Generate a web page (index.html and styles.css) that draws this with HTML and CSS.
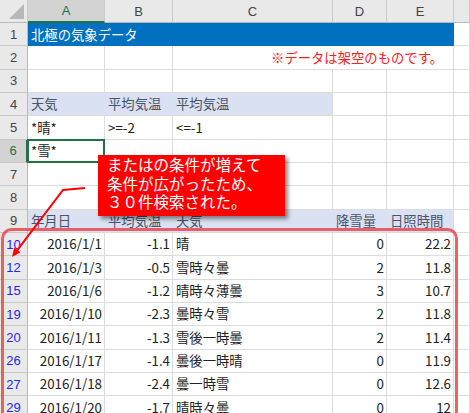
FILE: index.html
```html
<!DOCTYPE html>
<html lang="ja">
<head>
<meta charset="utf-8">
<link rel="stylesheet" href="styles.css">
</head>
<body>
<div class="sheet">
  <div class="grid">
    <!-- header row -->
    <div class="hd corner"><span class="tri"></span></div>
    <div class="hd col sel">A</div>
    <div class="hd col">B</div>
    <div class="hd col">C</div>
    <div class="hd col">D</div>
    <div class="hd col">E</div>
    <div class="hd col last"></div>

    <!-- row 1 -->
    <div class="rh">1</div>
    <div class="c title span5">北極の気象データ</div>
    <div class="c f"></div>

    <!-- row 2 -->
    <div class="rh">2</div>
    <div class="c"></div>
    <div class="c"></div>
    <div class="c note span3">※データは架空のものです。</div>
    <div class="c f"></div>

    <!-- row 3 -->
    <div class="rh">3</div>
    <div class="c"></div><div class="c"></div><div class="c"></div><div class="c"></div><div class="c"></div>
    <div class="c f"></div>

    <!-- row 4 -->
    <div class="rh">4</div>
    <div class="c hb in">天気</div>
    <div class="c hb in">平均気温</div>
    <div class="c hb">平均気温</div>
    <div class="c"></div><div class="c"></div>
    <div class="c f"></div>

    <!-- row 5 -->
    <div class="rh">5</div>
    <div class="c">*晴*</div>
    <div class="c">&gt;=-2</div>
    <div class="c">&lt;=-1</div>
    <div class="c"></div><div class="c"></div>
    <div class="c f"></div>

    <!-- row 6 -->
    <div class="rh rsel">6</div>
    <div class="c active">*雪*</div>
    <div class="c"></div><div class="c"></div><div class="c"></div><div class="c"></div>
    <div class="c f"></div>

    <!-- row 7 -->
    <div class="rh">7</div>
    <div class="c"></div><div class="c"></div><div class="c"></div><div class="c"></div><div class="c"></div>
    <div class="c f"></div>

    <!-- row 8 -->
    <div class="rh">8</div>
    <div class="c"></div><div class="c"></div><div class="c"></div><div class="c"></div><div class="c"></div>
    <div class="c f"></div>

    <!-- row 9 -->
    <div class="rh">9</div>
    <div class="c hb in">年月日</div>
    <div class="c hb in">平均気温</div>
    <div class="c hb in">天気</div>
    <div class="c hb in">降雪量</div>
    <div class="c hb">日照時間</div>
    <div class="c f"></div>

    <!-- data -->
    <div class="rh flt">10</div>
    <div class="c r">2016/1/1</div><div class="c r">-1.1</div><div class="c">晴</div><div class="c r">0</div><div class="c r">22.2</div>
    <div class="c f"></div>

    <div class="rh flt">12</div>
    <div class="c r">2016/1/3</div><div class="c r">-0.5</div><div class="c">雪時々曇</div><div class="c r">2</div><div class="c r">11.8</div>
    <div class="c f"></div>

    <div class="rh flt">15</div>
    <div class="c r">2016/1/6</div><div class="c r">-1.2</div><div class="c">晴時々薄曇</div><div class="c r">3</div><div class="c r">10.7</div>
    <div class="c f"></div>

    <div class="rh flt">19</div>
    <div class="c r">2016/1/10</div><div class="c r">-2.3</div><div class="c">曇時々雪</div><div class="c r">2</div><div class="c r">11.8</div>
    <div class="c f"></div>

    <div class="rh flt">20</div>
    <div class="c r">2016/1/11</div><div class="c r">-1.3</div><div class="c">雪後一時曇</div><div class="c r">2</div><div class="c r">11.4</div>
    <div class="c f"></div>

    <div class="rh flt">26</div>
    <div class="c r">2016/1/17</div><div class="c r">-1.4</div><div class="c">曇後一時晴</div><div class="c r">0</div><div class="c r">11.9</div>
    <div class="c f"></div>

    <div class="rh flt">27</div>
    <div class="c r">2016/1/18</div><div class="c r">-2.4</div><div class="c">曇一時雪</div><div class="c r">0</div><div class="c r">12.6</div>
    <div class="c f"></div>

    <div class="rh flt">29</div>
    <div class="c r">2016/1/20</div><div class="c r">-1.7</div><div class="c">晴時々曇</div><div class="c r">0</div><div class="c r">12</div>
    <div class="c f"></div>
  </div>

  <svg class="overlay" width="470" height="413" viewBox="0 0 470 413">
    <rect x="2.5" y="229.5" width="454" height="220" rx="9" ry="9" fill="none" stroke="#e8464e" stroke-opacity="0.85" stroke-width="3"/>
    <polyline points="85,188 63,190 17.5,249.8" fill="none" stroke="#ff0000" stroke-width="2"/>
    <polygon points="12,257 20.6,252.3 14.3,247.4" fill="#ff0000"/>
  </svg>

  <div class="callout">またはの条件が増えて<br>条件が広がったため、<br>３０件検索された。</div>
</div>
</body>
</html>
```

FILE: styles.css
```css
html, body {
  margin: 0;
  padding: 0;
  background: #ffffff;
}

.sheet {
  position: relative;
  width: 470px;
  height: 413px;
  overflow: hidden;
  font-family: "Noto Sans CJK JP", "Noto Sans", sans-serif;
  font-size: 13.33px;
  color: #222222;
}

.grid {
  display: grid;
  grid-template-columns: 28px 77px 68px 160px 54px 67px 1fr;
  grid-template-rows: 23px repeat(17, 23.33px);
}

.grid > div {
  box-sizing: border-box;
  border-right: 1px solid #dadcdd;
  border-bottom: 1px solid #dadcdd;
  white-space: nowrap;
  overflow: hidden;
  display: flex;
  align-items: center;
  line-height: 1;
}

.hd {
  background: #e9e9e9;
  color: #444444;
  justify-content: center;
  font-family: "Liberation Sans", "Noto Sans", sans-serif;
  font-size: 13px;
  border-right-color: #c9c9c9 !important;
  border-bottom-color: #b9b9b9 !important;
}

.corner {
  position: relative;
}

.tri {
  position: absolute;
  right: 3px;
  bottom: 3px;
  width: 0;
  height: 0;
  border-style: solid;
  border-width: 0 0 15px 15px;
  border-color: transparent transparent #b7b7b7 transparent;
}

.hd.sel {
  background: #d3d3d3;
  color: #217346;
  border-bottom: 2px solid #217346 !important;
}

.rh {
  background: #e9e9e9;
  color: #444444;
  justify-content: center;
  font-family: "Liberation Sans", "Noto Sans", sans-serif;
  font-size: 13px;
  border-right-color: #b9b9b9 !important;
  border-bottom-color: #c9c9c9 !important;
}

.rh.rsel {
  background: #d3d3d3;
  color: #217346;
  border-right: 2px solid #217346 !important;
}

.rh.flt {
  color: #2626ee;
}

.c {
  padding: 0 3px;
}

.c.r {
  justify-content: flex-end;
  padding-right: 2px;
}

.span5 {
  grid-column: span 5;
}

.span3 {
  grid-column: span 3;
}

.title {
  background: #0070c0;
  color: #ffffff;
  border-right-color: #0070c0 !important;
  border-bottom-color: #0070c0 !important;
}

.note {
  color: #ff2020;
  justify-content: flex-end;
  padding-right: 10px;
}

.hb {
  background: #d9e1f2;
  color: #4a5467;
}

.hb.in {
  border-right-color: #d9e1f2 !important;
}

.active {
  position: relative;
  overflow: visible !important;
}

.active::after {
  content: "";
  position: absolute;
  left: -1px;
  top: -1px;
  right: -1px;
  bottom: -1px;
  border: 2px solid #217346;
}

.overlay {
  position: absolute;
  left: 0;
  top: 0;
  pointer-events: none;
}

.callout {
  position: absolute;
  left: 98px;
  top: 155px;
  width: 187px;
  height: 61px;
  box-sizing: border-box;
  padding: 0 0 0 9px;
  background: #ff0000;
  color: #ffffff;
  font-size: 15.5px;
  line-height: 18.5px;
  white-space: nowrap;
  box-shadow: 3px 3px 4px rgba(0, 0, 0, 0.45);
}
```
